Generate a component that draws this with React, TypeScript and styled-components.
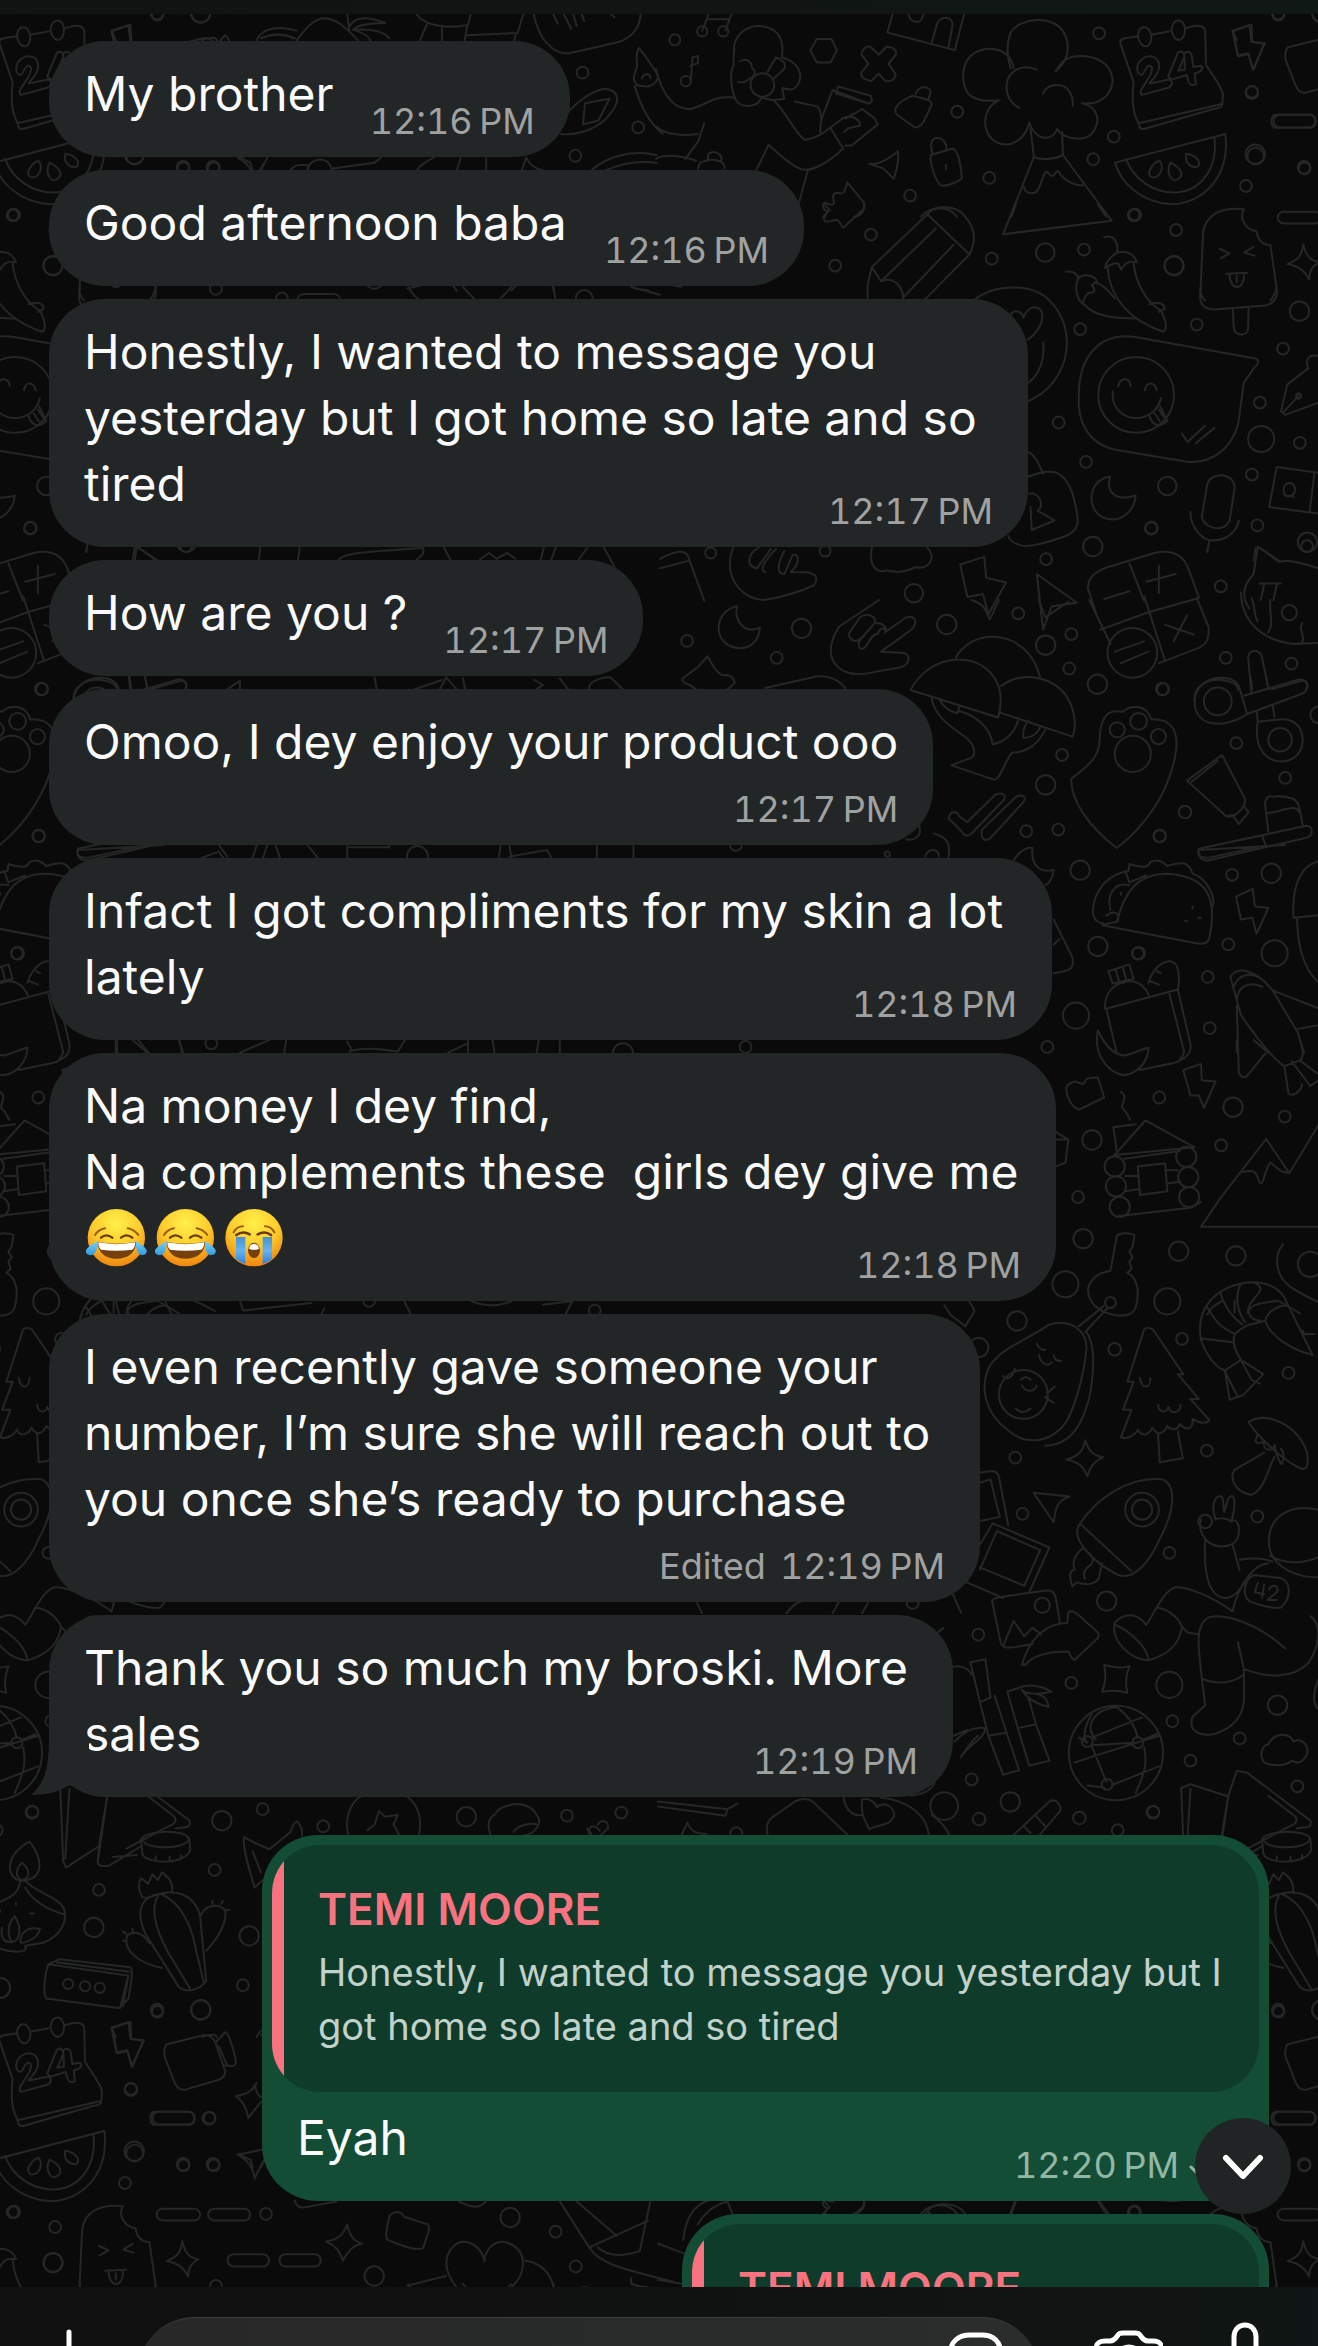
import React from "react";
import styled, { createGlobalStyle } from "styled-components";

const GlobalStyle = createGlobalStyle`
  *, *::before, *::after { box-sizing: border-box; }
  body { margin: 0; background: #0a0a0a; }
`;

/* ---------- layout ---------- */

const Screen = styled.div`
  position: relative;
  display: flex;
  flex-direction: column;
  height: 100vh;
  overflow: hidden;
  background: #0a0a0a;
  color: #fafafa;
  font-family: Inter, "Liberation Sans", sans-serif;
`;

const Wallpaper = styled.svg`
  position: absolute;
  inset: 0;
  width: 100%;
  height: 100%;
  fill: none;
  stroke: #252727;
  stroke-width: 2;
  stroke-linecap: round;
  stroke-linejoin: round;

  path,
  ellipse {
    vector-effect: non-scaling-stroke;
  }
`;

const TopBar = styled.header`
  position: relative;
  flex: none;
  height: 14px;
  background: linear-gradient(90deg, #111212, #101816);
`;

const Thread = styled.main`
  position: relative;
  flex: 1;
  min-height: 0;
  overflow: hidden;
  padding: 27px 49px 0;
`;

const MessageList = styled.ol`
  display: flex;
  flex-direction: column;
  gap: 13px;
  margin: 0;
  padding: 0;
  list-style: none;
`;

type Placement = "beside" | "overlap" | "below";

const Bubble = styled.li<{ $min?: number; $placement: Placement }>`
  position: relative;
  display: flex;
  flex-direction: ${(p) => (p.$placement === "beside" ? "row" : "column")};
  align-items: flex-end;
  justify-content: space-between;
  align-self: flex-start;
  min-width: ${(p) => p.$min ?? 0}px;
  max-width: 100%;
  padding: 20px 35px 16px;
  border-radius: 56px;
  background: #232626;
`;

const Body = styled.p`
  align-self: flex-start;
  margin: 0 0 14px;
  font-size: 48px;
  line-height: 66px;
  white-space: pre-wrap;
`;

const Line = styled.span`
  display: block;
  width: fit-content;
`;

const Meta = styled.div<{ $placement: Placement; $sent?: boolean }>`
  display: flex;
  flex: none;
  gap: 14px;
  margin-top: ${(p) => (p.$placement === "overlap" ? -40 : 0)}px;
  margin-left: ${(p) => (p.$placement === "beside" ? 36 : 0)}px;
  color: ${(p) => (p.$sent ? "#93b7a5" : "#a0a2a2")};
  font-size: 36px;
  font-variant-numeric: tabular-nums;
  line-height: 40px;
  white-space: nowrap;
`;

const Tail = styled.svg`
  position: absolute;
  left: -18px;
  bottom: 0;
  width: 60px;
  height: 60px;
  fill: #232626;
`;

const SentBubble = styled.li<{ $min: number; $first?: boolean }>`
  align-self: flex-end;
  min-width: ${(p) => p.$min}px;
  margin-top: ${(p) => (p.$first ? 25 : 0)}px;
  padding: 10px 10px 16px;
  border-radius: 56px;
  background: #144d35;
`;

const QuoteCard = styled.div`
  overflow: hidden;
  margin-bottom: 13px;
  border-radius: 48px;
`;

const Quote = styled.blockquote`
  margin: 0;
  padding: 32px 20px 39px 34px;
  border-left: 12px solid #f8737f;
  background: #0f3b2a;
`;

const QuoteName = styled.cite`
  display: block;
  margin-bottom: 4px;
  color: #f8737f;
  font-size: 44px;
  font-style: normal;
  font-weight: 600;
  line-height: 64px;
`;

const QuoteText = styled.p`
  margin: 0;
  color: #c1d2ca;
  font-size: 38px;
  line-height: 54px;
  white-space: pre-line;
`;

const SentRow = styled.div`
  display: flex;
  align-items: flex-end;
  justify-content: space-between;
  padding: 0 26px 0 25px;
`;

const Ticks = styled.svg`
  flex: none;
  align-self: center;
  width: 44px;
  height: 26px;
  margin-left: -4px;
  fill: none;
  stroke: #93b7a5;
  stroke-width: 3;
  stroke-linecap: round;
`;

const ScrollDown = styled.button`
  position: absolute;
  right: 27px;
  bottom: 73px;
  display: grid;
  place-items: center;
  width: 96px;
  height: 96px;
  padding: 0;
  border: 0;
  border-radius: 50%;
  background: #212424;

  svg {
    width: 44px;
    height: 44px;
    fill: none;
    stroke: #fff;
    stroke-width: 6;
    stroke-linecap: round;
    stroke-linejoin: round;
  }
`;

const Composer = styled.form`
  position: relative;
  display: flex;
  flex: none;
  align-items: flex-start;
  height: 59px;
  overflow: hidden;
  padding: 30px 38px 0 40px;
  background: linear-gradient(90deg, #101010 30%, #101615);
`;

const IconButton = styled.button`
  flex: none;
  width: 70px;
  height: 80px;
  padding: 0;
  border: 0;
  background: none;
  color: #fff;

  svg {
    display: block;
    width: 70px;
    height: 80px;
    fill: none;
    stroke: currentColor;
    stroke-width: 5;
    stroke-linecap: round;
    stroke-linejoin: round;
  }
`;

const Field = styled.label`
  display: flex;
  flex: 1;
  align-items: flex-start;
  min-width: 0;
  height: 114px;
  margin: 0 54px 0 28px;
  padding: 0 30px 0 40px;
  border-top: 1px solid #3a3c3c;
  border-radius: 57px;
  background: linear-gradient(90deg, #282828, #2a2d2c);
`;

const TextInput = styled.input`
  flex: 1;
  min-width: 0;
  height: 112px;
  padding: 0;
  border: 0;
  outline: 0;
  background: none;
  color: #fafafa;
  font: inherit;
  font-size: 48px;
`;

const Actions = styled.div`
  display: flex;
  gap: 47px;
`;

const Emoji = styled.svg`
  width: 65px;
  height: 61px;
  margin-right: 4px;
  vertical-align: -13px;
`;

/* ---------- wallpaper doodles ---------- */

type Dot = [number, number, number];
interface Sheet {
  x: number;
  y: number;
  sy: number;
  paths: string[];
  dots: Dot[];
}

const TILE_W = 1121;
const TILE_H = 1997;

const sheets: Sheet[] = [
  {
    x: 658,
    y: 0,
    sy: 0.3827,
    paths: [
      // notes
      "M105 80L122 32H176L160 80M118 50H168M78 212L82 150L95 146V165L76 172",
      // dancer with fan
      "M-5 180C10 250 40 290 80 284C120 272 130 250 178 255M180 130C180 95 210 60 255 70C290 80 300 110 294 150C330 160 345 190 335 215C325 240 310 235 295 230L300 258L272 262L245 255C240 280 200 285 185 262C175 240 168 190 180 170C178 155 180 140 182 128M195 160C210 150 222 160 224 178C235 185 230 200 218 205L205 215L190 215M260 188L280 150C300 160 305 165 300 180L275 205",
      "M275 262C310 300 325 350 350 366C380 360 395 345 410 333M325 265L378 278C390 290 385 300 388 312L385 345M388 312L415 235L500 270M428 226L505 250C512 262 505 272 498 270L422 244ZM410 333L440 308C460 300 480 310 480 328L452 335L442 345M410 335L440 388M485 285L515 310L522 325L460 380H445M485 285L445 310M440 388C400 430 360 450 340 442C310 430 285 400 263 378L232 448M356 445L335 530M-5 330C20 355 60 355 95 350M110 322L95 370L65 415M-5 415C20 400 70 410 90 420M95 440L100 425C130 410 160 420 158 440M118 415L120 402C135 390 155 405 150 420",
      // hexagon, cross
      "M377 102H412L425 132L410 163H377L362 132Z",
      "M505 122L524 143L543 122C560 122 568 132 565 142L548 167L565 195C562 210 550 214 540 212L524 192L507 212C492 210 480 200 483 190L500 167L483 142C485 128 495 120 505 122Z",
      // building
      "M558 35L545 85L705 131L727 38M650 115L662 65C668 40 700 40 700 65L690 125M595 35C595 62 630 65 630 38",
      // padlocks
      "M605 250C560 270 560 290 568 300L610 333C620 333 625 328 630 320L650 275C650 260 640 262 632 258ZM612 245C620 225 640 222 648 240L642 262",
      "M648 405L700 388C712 390 720 430 722 465C715 475 690 485 675 486C660 480 645 425 648 405ZM652 400C645 375 650 360 665 360C678 362 685 375 686 392",
      "M684 432V442",
      // arrow, puzzle piece
      "M502 428C520 430 535 425 570 395C572 410 570 440 560 467L535 440Z",
      "M450 477L490 530V545L440 595C432 590 435 578 425 574C415 575 405 582 396 578C390 570 402 560 402 552C390 548 390 535 396 530C408 532 412 540 418 532C420 520 410 515 420 505C432 500 432 512 442 502Z",
      // tree on a peak
      "M845 178C835 120 780 120 750 140C715 165 720 235 745 252C770 270 800 262 810 262C770 280 765 350 805 372C840 390 875 360 882 320C890 345 905 360 920 360C935 360 945 350 948 337C965 365 1010 370 1030 350C1055 315 1045 280 1008 270C1050 275 1075 250 1080 215C1080 160 1030 140 985 148C960 155 950 175 945 186C980 155 980 110 960 78C935 40 860 45 838 85C825 120 830 150 838 178",
      "M900 182C865 165 830 185 828 225C828 255 840 272 858 282M915 245C925 215 965 215 978 240C985 252 987 265 985 277M885 335L893 410C910 420 945 415 962 405L960 345M893 410L820 612L1078 577L962 405M870 488C868 505 895 512 903 495C912 480 912 460 922 448C930 450 930 462 938 460C945 458 942 445 952 448C960 470 990 485 1010 485",
      // calendar
      "M1098 112C1096 100 1110 100 1142 95M1175 90L1215 82M1252 75C1290 60 1298 70 1300 82L1302 165M1098 112L1130 215C1125 260 1130 300 1142 322L1340 272M1302 170C1320 200 1340 230 1342 245C1340 280 1345 280 1320 285L1155 337C1142 338 1142 325 1142 322",
      "M1140 95C1142 65 1165 62 1172 92C1175 125 1148 135 1140 95ZM1220 80C1222 48 1245 45 1252 72C1255 108 1228 118 1220 80Z",
      "M1140 190C1130 150 1180 130 1190 165C1195 190 1175 205 1168 218L1215 208C1225 212 1222 228 1210 230L1150 248C1140 240 1155 225 1165 205C1175 190 1178 170 1165 172C1155 178 1158 192 1148 196ZM1212 200L1235 138C1245 130 1252 140 1250 150L1236 185L1252 182L1250 140C1258 132 1266 135 1268 145L1272 175L1290 172C1298 178 1292 188 1275 192L1278 220C1270 225 1262 222 1260 212L1256 196L1220 208Z",
      // bolt
      "M1367 80L1410 65L1412 110L1442 113L1413 182L1403 142L1378 147Z",
      // watermelon
      "M1086 425L1348 350C1360 470 1290 530 1220 534C1150 530 1100 480 1086 425ZM1112 415C1130 470 1180 505 1230 503C1290 500 1330 440 1322 360",
      "M1192 420C1175 425 1158 455 1172 462C1190 470 1205 440 1192 420ZM1218 425C1205 450 1220 475 1232 470C1252 460 1245 440 1218 425ZM1255 402C1250 430 1270 440 1283 435C1292 420 1275 405 1255 402Z",
      // dashes
      "M1475 300H1550C1566 305 1566 328 1550 333H1475C1458 328 1458 305 1475 300ZM1485 553H1562C1580 558 1580 580 1562 584H1485C1468 578 1468 558 1485 553ZM1608 553H1682C1698 558 1698 580 1682 584H1608C1590 578 1590 558 1608 553ZM1653 672H1727C1743 677 1743 700 1727 704H1653C1637 698 1637 677 1653 672ZM1776 672H1850C1866 677 1866 700 1850 704H1776C1760 698 1760 677 1776 672Z",
      // ice lolly
      "M1392 547C1340 540 1300 560 1295 610L1288 780C1290 805 1310 810 1330 808L1445 798C1470 790 1472 770 1470 755L1455 640C1440 642 1425 630 1422 604C1395 600 1380 570 1392 547ZM1366 808L1368 860C1375 880 1398 878 1402 860L1403 804M1335 650L1358 662L1337 675M1415 645L1393 660L1417 668M1350 715L1400 713M1358 716C1358 762 1395 762 1392 714M1375 722V738",
      // chillies
      "M1060 620C1085 610 1095 640 1090 660C1065 680 1065 690 1062 700C1080 690 1085 685 1095 690L1100 705C1108 690 1115 680 1138 685C1130 660 1110 655 1092 660M1068 700C1075 790 1130 840 1200 867C1210 860 1208 840 1195 812C1160 790 1135 740 1130 688M1168 795C1190 785 1205 795 1203 808L1190 815",
      "M970 710C985 708 998 715 998 728M1000 725C1020 712 1040 725 1043 735L1030 745C1040 755 1038 765 1028 765C1018 762 1010 785 1010 795C990 775 990 745 1000 725ZM1012 795C1040 830 1090 832 1135 832M1043 740C1060 745 1075 765 1085 780",
      // sparkle
      "M1533 638C1540 670 1550 682 1572 685C1555 695 1548 705 1547 730C1535 705 1520 695 1496 690C1520 680 1530 668 1533 638Z",
      // pencil
      "M498 785V745L508 698L640 560C660 530 710 540 725 560C750 590 760 620 740 665L632 785M640 560L740 665M660 597L530 735M702 640L582 778M508 698L530 735C560 720 585 750 582 785",
      // heart balloon and padlock
      "M750 785C800 740 890 740 930 785C1000 860 980 1000 880 1048M838 822C845 808 865 812 868 830C880 795 910 795 913 822C915 850 895 875 878 888M915 895C920 940 905 980 880 1000M882 1182C900 1195 905 1215 915 1238M880 1245C940 1220 965 1230 985 1290C1005 1370 1000 1385 970 1400C920 1420 880 1430 862 1425C845 1420 835 1410 832 1400M882 1290C905 1285 920 1320 902 1335L942 1360L888 1385L885 1325",
      // speech bubble
      "M1130 880L1420 937C1430 940 1425 955 1418 958L1392 1000L1378 1110C1360 1180 1310 1210 1260 1207L1090 1176C1020 1160 995 1100 1000 1030C1000 930 1050 870 1130 880ZM1093 1010C1098 985 1120 985 1123 1008M1157 1020C1160 995 1180 998 1185 1020M1080 1022C1075 1110 1180 1115 1195 1040M1168 1088C1175 1110 1190 1120 1210 1100L1193 1062M1180 1080L1192 1100M1190 1070L1202 1090M1245 1133L1258 1155L1300 1112M1278 1158L1322 1118",
      // moon, microphone
      "M1074 1245C1065 1280 1080 1312 1135 1295C1130 1345 1095 1360 1075 1357C1015 1350 1015 1255 1074 1245Z",
      "M1305 1265C1315 1230 1370 1235 1370 1275L1358 1360C1345 1395 1295 1380 1292 1350ZM1265 1338C1265 1380 1295 1415 1320 1412C1350 1412 1375 1390 1380 1360M1310 1412L1305 1442",
      // pen nib
      "M1480 1075L1495 1005L1545 962C1535 935 1550 925 1570 930L1610 980L1575 1050L1490 1084ZM1485 1078L1522 1035",
      // playing card
      "M1470 1220L1600 1240L1590 1345L1452 1325ZM1560 1232L1548 1340M1490 1295C1478 1270 1500 1250 1512 1270C1518 1290 1505 1300 1490 1295L1510 1298",
      // bolt and arrow, hand, cat
      "M718 1475L775 1455L780 1510L827 1522L785 1605L772 1552L735 1560ZM900 1500L995 1575L935 1585L915 1645ZM5 1460C40 1440 70 1430 75 1465L5 1485M75 1465L110 1570",
      "M178 1432C155 1500 190 1560 250 1568C300 1560 340 1545 370 1530C385 1505 370 1500 355 1495H315C340 1470 335 1445 320 1450L300 1500C280 1500 285 1470 300 1440M240 1430C210 1450 210 1480 235 1485L268 1435M255 1495C235 1490 265 1450 280 1435M508 1432C500 1480 520 1500 545 1490C570 1500 600 1490 610 1482C650 1490 660 1450 640 1432",
      "M1425 1428L1475 1468C1510 1460 1550 1480 1600 1495M1425 1428L1415 1500C1390 1530 1385 1560 1405 1590M1430 1525H1480M1440 1528L1432 1568M1470 1528L1462 1568",
      // tablet top
      "M1040 1600L1022 1540C1020 1515 1030 1500 1060 1485L1180 1445C1220 1435 1245 1450 1258 1480L1285 1560M1120 1472L1155 1570M1190 1478V1550M1160 1520L1230 1500M1060 1565L1120 1545",
    ],
    dots: [
      [105, 82, 12], [155, 82, 12], [66, 212, 12], [248, 222, 28], [40, 104, 13], [711, 292, 14], [599, 511, 14], [506, 613, 14], [421, 694, 14], [787, 465, 14],
      [793, 676, 14], [1048, 87, 14], [1083, 357, 14], [1034, 416, 14], [1133, 562, 14], [1012, 652, 14], [920, 660, 22], [1231, 601, 14],
      [1226, 694, 23], [1003, 860, 14], [1280, 848, 14], [1411, 240, 14], [1419, 403, 23], [1397, 486, 14], [1536, 440, 14], [1608, 440, 14],
      [1524, 813, 23], [1485, 911, 14], [1430, 1052, 14], [1433, 1147, 31], [1525, 1157, 14], [952, 1104, 14], [1017, 1207, 14],
      [1210, 1270, 22], [1411, 1240, 14], [1172, 1380, 14], [1424, 1373, 14], [1033, 1428, 23], [1543, 1417, 23], [922, 1461, 14],
      [1337, 1532, 14], [608, 1550, 22], [397, 1440, 13], [125, 1445, 13], [1474, 38, 13], [1136, 1032, 90], [1522, 1035, 6],
      [1732, 567, 14], [1598, 316, 14],
    ],
  },
  {
    x: 658,
    y: 600,
    sy: 0.3827,
    paths: [
      "M188 16C180 55 205 90 242 72C240 115 210 130 185 125C130 115 130 30 188 16Z",
      // rock hand
      "M525 0L430 70C385 150 425 200 490 193L580 175C600 165 600 140 580 138L530 135M530 135L605 75C620 50 605 40 590 45L545 80C535 70 525 75 522 88C505 90 505 110 490 125C478 135 470 115 485 98M485 98C465 120 445 95 458 80L480 45C500 30 520 45 515 60L485 98M515 60C540 60 545 75 540 85",
      // tablet with buttons
      "M1025 0L1075 115M1050 78L1165 32L1285 -5M1155 -10L1205 160M1280 -5L1308 70C1310 100 1305 115 1285 125L1190 165M1205 65L1272 90M1257 40L1225 108M1085 135L1155 108M1100 165L1165 135",
      "M1385 -20C1385 50 1430 105 1510 115L1580 112M1410 -5C1420 20 1415 40 1425 55M1455 0C1450 30 1465 60 1450 85M1530 60C1520 80 1540 95 1530 112",
      "M745 0C770 10 775 15 788 50C795 40 800 20 810 0M905 0L920 45L975 5",
      "M58 205L95 175L118 147C125 160 130 180 150 195C170 195 180 200 182 218L165 233M58 205C55 222 75 215 90 233",
      "M255 230L375 200C405 195 430 210 445 230",
      // mushrooms
      "M600 235C640 150 740 130 790 190C815 220 820 260 808 307ZM708 150C740 85 830 75 880 140C900 165 905 190 908 203M815 225C870 180 950 205 975 260C995 300 992 340 985 357L815 295M650 255C655 295 680 320 730 358C755 380 755 405 745 412L697 432L800 470C815 465 820 430 840 400C880 395 900 380 920 340M668 258C680 285 700 295 712 295L716 277M716 290C750 300 790 330 795 377C830 370 850 340 855 315M868 360C865 340 875 320 880 315M868 360C890 360 905 345 908 330",
      // paw on a pin
      "M982 467C1040 420 1050 400 1050 350C1055 300 1070 285 1105 292C1120 275 1160 270 1172 312C1210 310 1240 330 1230 400C1215 500 1160 590 1090 648C1020 590 980 520 982 467Z",
      // scissors
      "M1392 250L1525 207C1545 210 1550 235 1530 245L1400 298L1380 225M1410 245L1402 150C1405 128 1430 128 1435 150L1450 230M1422 290L1425 318L1475 312M1460 275L1465 305M1275 265C1275 200 1360 185 1380 225M1275 265C1275 330 1340 340 1400 298M1425 318C1415 380 1440 420 1480 422C1530 420 1540 370 1525 335C1510 310 1490 310 1475 312",
      "M1340 405L1257 472L1350 565C1370 570 1395 545 1395 520ZM1330 420L1268 475M1350 565L1365 562L1380 585L1403 555L1395 542",
      // toothbrush
      "M1285 650L1540 590C1555 590 1558 610 1545 620L1310 680C1290 685 1280 665 1285 650ZM1435 615L1445 645M1450 605L1442 530C1450 500 1460 520 1475 512C1500 515 1520 515 1525 550L1532 590M1445 555C1470 560 1480 545 1500 545C1515 540 1520 548 1525 555",
      // ticks
      "M690 570C695 550 710 550 715 565L735 580L800 510C815 500 830 508 822 522L745 610C735 620 725 615 722 605ZM770 600L850 515C865 505 878 515 868 528L790 622C775 635 765 620 770 600Z",
      "M845 680C860 655 875 645 890 648C885 690 905 715 940 705C938 725 930 740 920 745M620 590C630 620 605 630 590 625M655 610C690 620 695 640 690 672M635 670C640 650 665 645 668 670",
      // taco
      "M1055 850L1285 898C1305 900 1310 890 1312 870C1330 760 1290 720 1210 715C1140 715 1110 760 1090 840ZM1058 845C1020 840 1030 780 1060 740C1080 720 1100 710 1118 708L1120 690C1150 700 1165 700 1170 685C1190 675 1200 685 1210 695C1240 685 1260 680 1270 715C1300 725 1325 770 1318 800M1110 708L1120 738L1160 720M1075 810C1065 770 1085 735 1120 745M1065 825C1080 810 1100 815 1092 840M1252 838H1258M1284 830H1290M1270 800V806M1100 765V770M1105 790V794",
      "M1373 775L1413 755L1418 800L1450 805L1422 872L1412 830L1385 835Z",
      "M1590 680C1530 680 1505 740 1510 830L1600 820M1518 830C1520 900 1530 960 1570 1000",
      "M940 835L985 935C988 960 985 970 940 975M940 900L955 885",
      // lunch bag and banana
      "M1065 1068L1235 1018L1265 1160C1268 1190 1250 1200 1225 1210L1145 1228M1065 1068L1090 1185M1062 1068C1060 1030 1080 1005 1105 1000C1130 990 1155 1000 1168 1038M1070 970L1120 952L1130 990L1080 1002ZM1088 968L1095 995M1105 962L1112 990M1165 1000C1180 950 1215 930 1232 955C1240 975 1238 1000 1235 1018M1185 970L1195 975M1168 995L1190 1005M1215 1030L1250 1180C1248 1195 1240 1200 1235 1208M1045 1125C1060 1160 1080 1190 1110 1190C1130 1185 1145 1175 1165 1170C1165 1210 1135 1240 1105 1242C1060 1230 1035 1180 1045 1125Z",
      // plane
      "M1360 985C1375 955 1420 965 1460 1020L1520 1130C1535 1180 1535 1195 1525 1203L1488 1218C1460 1200 1420 1140 1385 1085ZM1375 1045C1378 1010 1400 995 1435 1010M1368 1010C1380 975 1410 975 1425 985M1375 1060L1380 1235C1385 1250 1395 1250 1402 1240L1443 1185M1460 1020L1600 1080M1515 1122L1600 1105M1488 1218L1498 1290C1510 1300 1530 1280 1530 1265M1505 1205L1550 1270L1600 1230M1525 1203L1570 1240",
      "M1248 1228L1290 1212L1292 1255L1325 1258L1297 1327L1285 1295H1265Z",
      "M970 1275C972 1262 985 1262 990 1258L1010 1265L1020 1250L1045 1247L1060 1300L1000 1332C985 1328 970 1300 970 1275ZM1100 1285C1120 1300 1095 1320 1105 1330C1118 1340 1115 1350 1122 1358",
      // log cabin
      "M1085 1450L1158 1360L1275 1430ZM1090 1440L1082 1378L1135 1370M1110 1505H1140M1108 1460L1240 1440M1140 1480L1205 1472L1210 1545L1145 1555ZM1205 1490H1235M1210 1525L1240 1520M1110 1545L1140 1540M945 1390L975 1410L968 1470L945 1480M945 1410H970",
      "M1600 1638H1290L1335 1565L1445 1408L1500 1498L1570 1370M1390 1495C1410 1490 1420 1485 1428 1520C1440 1540 1438 1490 1455 1470L1480 1492L1500 1498",
    ],
    dots: [
      [341, 74, 23], [69, 107, 14], [282, 151, 14], [686, 64, 23], [856, 35, 14], [982, 89, 14], [921, 118, 23], [977, 179, 14], [1044, 220, 23],
      [1200, 233, 14], [1349, 151, 14], [1505, 166, 14], [1127, 138, 59], [1500, 33, 18], [1091, 339, 18], [1142, 317, 20], [1189, 357, 18], [1128, 402, 43],
      [1330, 265, 33], [1478, 365, 28], [960, 405, 14], [1374, 374, 14], [1490, 465, 14], [921, 483, 23], [875, 604, 14], [951, 600, 14],
      [1252, 554, 15], [1192, 617, 14], [1003, 706, 23], [1364, 718, 14], [1457, 714, 23], [1045, 905, 23], [1142, 923, 15], [1355, 900, 14],
      [1465, 923, 31], [1306, 985, 14], [993, 1086, 31], [1311, 1119, 14], [925, 1168, 14], [1191, 1300, 14], [1366, 1325, 23], [1489, 1350, 14],
      [1031, 1411, 23], [1338, 1425, 14], [998, 1560, 14], [1085, 1480, 24], [1088, 1532, 24], [1255, 1455, 24], [1260, 1508, 24], [1262, 1560, 24],
      [1570, 300, 20], [208, 1168, 14], [545, 664, 6], [185, 640, 14],
    ],
  },
  {
    x: 658,
    y: 1200,
    sy: 0.3827,
    paths: [
      "M1095 42L1265 20M1270 18L1290 5",
      // key and avocado
      "M1090 95C1095 85 1120 85 1132 92L1128 120L1120 135L1128 150L1120 160L1125 180L1115 190C1140 205 1145 240 1135 280C1130 305 1095 305 1075 298C1040 290 1020 260 1022 230C1030 200 1050 190 1075 185ZM1068 282L1015 345M1058 278L1000 330",
      "M930 325C980 310 1020 340 1018 390C1010 470 990 540 970 580C930 640 870 640 830 600C780 560 760 490 790 430C820 385 870 370 930 325ZM1018 345C1040 380 1035 440 1028 500C1010 590 980 640 920 642M820 460C828 475 845 460 848 440M862 470C870 460 880 462 885 470M865 485C875 505 895 500 900 485M925 505L942 488M920 515L940 530M850 545C862 558 875 556 885 545M900 375C905 390 915 392 920 392M905 405C910 430 925 435 935 425M940 405C940 415 948 422 958 420",
      // fir
      "M1155 338C1165 330 1175 335 1180 345L1248 455H1235L1285 520H1265L1310 575C1305 585 1290 585 1270 572C1272 600 1255 605 1240 585C1235 605 1215 600 1210 590C1200 615 1185 615 1175 595C1165 620 1145 615 1140 600C1130 620 1110 625 1100 620L1125 548H1105L1130 475H1115ZM1145 465C1148 495 1170 495 1170 465M1188 535C1190 560 1212 555 1212 540C1218 560 1240 560 1242 535M1188 608L1192 685L1247 675L1235 605",
      // prawn
      "M1290 365C1275 270 1340 220 1410 215C1460 215 1485 240 1495 270L1555 405C1500 390 1450 350 1443 315C1450 285 1480 275 1495 275M1443 315C1420 325 1395 320 1370 352C1362 375 1375 400 1385 418L1438 455L1390 510L1358 522L1347 445M1290 365C1300 400 1325 440 1347 445L1385 418M1385 418L1410 470L1430 480M1345 445L1378 515M1292 362L1365 372M1305 280C1330 330 1350 340 1372 350M1335 240C1350 290 1370 310 1388 325M1385 218C1370 250 1375 290 1395 320M1415 215C1455 235 1410 250 1402 285C1405 310 1420 315 1430 315M1485 115C1460 150 1470 200 1500 225C1530 250 1580 270 1610 290M1530 340L1538 352M1535 350H1560",
      // sparkle, mushroom
      "M1015 628C1025 660 1035 668 1058 672C1035 685 1028 695 1020 722C1010 695 1000 685 970 678C1000 670 1010 655 1015 628Z",
      "M1403 580C1450 550 1520 590 1542 660C1545 680 1545 705 1530 703C1480 680 1420 610 1403 580ZM1425 615C1412 635 1425 640 1440 630C1435 655 1460 660 1465 640C1470 675 1480 690 1482 690C1490 670 1485 655 1480 650M1440 660L1370 705C1355 730 1375 765 1410 770C1440 760 1450 700 1465 670",
      // cursor and rocket
      "M892 765L978 775C950 785 945 800 940 842Z",
      "M1000 850C1040 780 1120 720 1200 730C1235 750 1225 820 1190 890C1170 940 1130 1000 1090 978C1040 950 980 890 1000 850ZM1005 848L1125 970M1010 910C985 930 985 955 990 965C975 970 978 990 985 1010C990 1005 992 998 1000 1000C1020 1010 1045 1000 1048 985L1055 950M1020 920C1040 935 1035 950 1020 960C1010 970 1010 985 1015 990",
      // photos
      "M765 712L795 708C808 710 810 720 812 735L832 850M767 738L790 730L812 828L768 838M765 900L795 845L930 908L882 1025M765 965L805 865L908 915L870 1008L765 960M735 1000L820 1040",
      "M795 1055C790 1045 800 1040 810 1038L925 1020C940 1020 942 1030 945 1040L955 1105M795 1055L815 1160C820 1172 835 1170 850 1168L890 1160M820 1165L845 1100L870 1140L890 1118L910 1135",
      "M865 1215C880 1150 920 1105 972 1105L975 1078C980 1072 990 1075 1000 1085L1045 1130C1050 1138 1045 1145 1040 1150L990 1202C980 1200 978 1180 975 1180C940 1180 895 1185 872 1215Z",
      // astronaut
      "M1325 835C1310 790 1330 760 1342 780L1345 815L1355 780C1370 760 1375 790 1362 840M1290 835C1285 860 1290 870 1300 885C1320 915 1370 910 1378 880C1385 850 1375 830 1362 840C1350 830 1330 830 1325 835M1300 885C1295 980 1310 1040 1350 1040C1380 1035 1390 1000 1410 975M1365 900L1382 968M1382 940C1410 935 1440 935 1460 945M1365 1075C1380 1000 1420 950 1450 950M1365 1075C1310 1030 1250 1010 1230 1012C1200 1020 1180 1080 1160 1110C1140 1080 1110 1075 1085 1105C1075 1150 1120 1200 1165 1203C1210 1190 1240 1160 1245 1115L1258 1130L1285 1135M1085 1110C1110 1120 1160 1160 1165 1200M1185 1065C1220 1070 1240 1100 1245 1115M1490 1172C1430 1110 1350 1080 1310 1090C1270 1110 1285 1180 1300 1320L1270 1350C1255 1400 1310 1405 1335 1390C1380 1370 1395 1330 1392 1290V1225C1385 1190 1380 1170 1378 1155M1292 1250C1330 1270 1370 1260 1392 1240M1392 1225C1450 1250 1510 1250 1545 1210C1570 1170 1580 1110 1550 1088M1570 810C1500 790 1445 830 1452 905C1460 960 1520 990 1580 985M1455 930C1490 955 1550 950 1580 925",
      "M1415 980L1480 988C1505 1000 1505 1040 1480 1065C1460 1070 1420 1055 1405 1048C1385 1030 1395 990 1415 980ZM1425 1000L1418 1025L1440 1030M1440 1005L1435 1040M1452 1018C1460 1000 1478 1010 1470 1025L1448 1045H1470",
      "M1060 1215C1080 1220 1100 1225 1120 1218C1112 1240 1110 1265 1115 1288C1095 1280 1070 1282 1055 1285C1065 1260 1065 1240 1060 1215Z",
      // bamboo
      "M742 1208L778 1200L790 1300L765 1312ZM765 1312L785 1400L828 1392L800 1295M785 1400L820 1502L858 1490L828 1392M702 1220C720 1215 740 1225 745 1240M830 1285L870 1270C900 1265 920 1275 935 1285C900 1295 870 1290 865 1280C880 1310 910 1320 928 1325C925 1300 910 1290 895 1290M830 1285L855 1380L898 1370L880 1300M855 1380L882 1478L930 1465L898 1370M705 1415C730 1385 755 1375 778 1380C775 1410 740 1420 720 1455C735 1430 745 1415 760 1400M702 1400L735 1385",
      // globe
      "M1030 1345C1010 1380 1010 1410 1020 1418L1000 1405M1030 1405L1150 1352M1030 1425L1065 1520M1030 1425L1130 1418M1040 1410C1010 1370 1040 1330 1090 1325C1120 1350 1135 1380 1140 1405M1150 1412L1185 1395M1155 1430C1165 1480 1150 1510 1135 1550M990 1470L1045 1450L1190 1400M1080 1528L1190 1480M1060 1535L1020 1530",
      "M1455 1475C1420 1470 1435 1420 1450 1422C1465 1390 1500 1390 1510 1415C1535 1400 1555 1440 1535 1460C1525 1475 1515 1470 1505 1465C1490 1480 1470 1478 1455 1475Z",
      "M1570 1250C1555 1290 1555 1320 1570 1330M680 275L695 300L730 330L752 290L740 265M678 1118L660 1135M700 1030L720 1078M90 1048L105 1080M305 1080C320 1060 330 1050 345 1048M430 1050L415 1080M500 1050L485 1080",
    ],
    dots: [
      [1097, 18, 24], [1010, 101, 23], [1237, 134, 23], [1373, 146, 23], [968, 220, 31], [1210, 265, 31], [853, 316, 23], [762, 385, 23], [1085, 390, 15],
      [1245, 363, 14], [1498, 452, 14], [1075, 268, 13], [868, 508, 58], [849, 673, 14], [1304, 655, 14], [866, 820, 14], [1424, 827, 14],
      [1150, 809, 40], [1150, 809, 24], [1215, 922, 14], [913, 1059, 18], [1066, 1048, 23], [1300, 840, 16], [761, 1136, 14], [982, 1262, 14],
      [1215, 1267, 31], [1222, 1362, 14], [1472, 1320, 23], [1382, 1407, 14], [1265, 1465, 14], [745, 1514, 14], [1088, 1445, 112], [1020, 1415, 13],
      [1140, 1418, 13], [1067, 1527, 13], [1519, 1532, 14], [1550, 168, 30], [605, 1053, 14],
    ],
  },
  {
    x: 0,
    y: 1746,
    sy: 0.3827,
    paths: [
      // folded map
      "M143 110L150 300L157 318L235 262L255 130M165 112L155 295M143 110L165 100L255 132M235 262L232 305C235 315 245 315 260 312L335 262M232 305L255 130L275 65L300 70L450 195C455 215 440 212 418 215M350 130L415 185C420 195 415 205 400 210L300 268M268 290L325 285",
      "M335 245C340 220 445 215 450 245L452 270C445 310 345 312 338 280ZM342 250C350 270 440 270 448 245M370 288V300M403 290V302M430 285V295",
      // oil lamp
      "M70 250C100 290 110 350 50 352C10 345 15 280 70 250ZM52 305C75 325 70 350 50 350C35 340 38 320 52 305ZM48 352C46 380 35 395 -30 420M60 352C80 380 130 390 150 420C165 460 140 500 100 515L60 522M60 370C80 410 120 430 152 440M60 522C70 545 20 540 -10 525M35 445C20 460 15 490 28 512C45 510 55 480 35 445ZM5 475C0 500 10 515 28 512M95 478C60 470 45 495 50 515C70 512 90 500 95 478ZM38 410V416M72 438H80M0 430V434",
      // cactus
      "M338 395C325 370 330 355 335 345L352 360L362 335L375 350L385 330L400 345C412 360 408 375 410 385M338 395C350 400 360 395 368 388M368 390C330 400 325 440 345 490L425 630C440 645 460 638 475 630L490 615L475 440C460 390 420 370 368 390ZM375 392C355 430 375 490 400 540L452 635M385 388C430 410 455 470 465 530L485 622M478 440C490 415 520 410 535 430C540 460 520 500 490 535M385 580C340 570 290 540 302 495C320 480 340 490 355 515M505 415V405M525 412L530 405M535 430L545 428M300 490L292 485M315 485V477M292 508L300 512",
      // brick with dots
      "M115 570L305 600L285 685L110 660C100 640 108 590 115 570ZM115 570L142 557L310 578C315 582 315 600 305 660L285 685M135 565L308 590M305 600L292 680",
      // video camera
      "M395 780L485 755C500 755 508 765 512 775L535 850C535 860 530 868 520 872L440 898C425 900 420 890 415 880L392 815C388 800 390 790 395 780ZM512 775L535 748C545 750 562 820 560 830C555 840 550 835 530 835M520 785L540 835",
      "M265 738L305 722L310 765L340 770L315 838L302 795L277 800Z",
      "M365 956H452C466 962 466 984 452 990H365C355 984 355 962 365 956Z",
      "M605 885C610 910 615 915 622 918M590 972C585 940 575 925 560 915C590 910 600 900 610 880M590 972L620 930M565 1068L622 1055M565 1068C585 1080 600 1095 605 1130L625 1085",
      // fox
      "M605 370C595 330 575 270 580 238C605 255 625 262 640 270L690 225C695 205 700 200 705 197C715 205 718 220 718 235M605 370L625 350M600 275L620 330",
      "M873 220L890 205L900 170L915 185L945 180L935 205L948 232M828 235C815 180 840 140 860 130M965 130C990 150 1005 180 995 235",
      "M1165 230C1155 200 1165 185 1175 180C1185 160 1200 158 1210 155C1240 145 1265 160 1275 180C1290 200 1275 230 1240 235M1220 225C1230 205 1265 200 1275 205M1395 215L1400 230M1420 205C1430 190 1445 195 1445 215L1425 235M1405 230C1390 210 1415 200 1425 222",
      "M700 1188C705 1205 715 1208 725 1205L800 1190M1090 1190C1110 1200 1135 1215 1155 1190M925 1228C935 1215 955 1215 960 1230L1010 1248C1022 1250 1020 1260 1018 1270L1005 1312C990 1320 950 1305 920 1290C912 1275 925 1240 925 1228ZM825 1250C830 1280 840 1295 860 1300C840 1305 825 1320 815 1345C805 1315 795 1305 775 1295C800 1290 815 1280 825 1250Z",
      "M1150 1345C1155 1310 1180 1285 1210 1300C1255 1320 1250 1380 1215 1415M1152 1345C1140 1300 1100 1280 1075 1310C1050 1340 1060 1380 1085 1415M968 1410L1060 1385M1248 1345C1285 1350 1310 1380 1315 1415",
      "M1330 1190L1400 1310L1540 1240M1370 1190L1465 1280M1400 1310C1420 1350 1470 1365 1600 1400M1420 1310C1450 1340 1490 1330 1520 1320L1545 1190M1500 1390C1495 1410 1510 1412 1540 1414",
    ],
    dots: [
      [76, 173, 15], [527, 195, 23], [624, 165, 14], [768, 210, 14], [1108, 185, 23], [1347, 182, 14], [1476, 174, 14], [510, 324, 14], [235, 376, 14], [223, 474, 23],
      [592, 496, 23], [162, 622, 12], [202, 628, 12], [237, 632, 12], [0, 632, 24], [577, 625, 14], [373, 690, 15], [477, 689, 23], [311, 898, 15],
      [496, 973, 15], [1212, 1232, 23], [1320, 1269, 14], [889, 1385, 23], [1368, 1360, 14],
    ],
  },
  {
    x: 658,
    y: 1746,
    sy: 0.3827,
    paths: [
      "M0 145L165 165L190 150M0 158L160 182L165 165M55 235L70 200C78 225 90 228 115 230M260 230C255 200 265 190 280 180L325 145C345 135 360 138 370 148L450 232M440 130C445 170 465 185 485 180M485 140C500 135 515 145 520 160C540 140 565 165 560 185C550 210 520 205 502 218C495 200 480 180 485 140ZM530 135C590 140 640 180 643 232M600 130C640 125 655 110 658 90M650 180C670 195 685 215 692 232",
      "M845 232L930 145C945 135 960 155 955 170L905 235M895 180L922 212M870 210L885 228",
      "M60 1290C65 1240 80 1200 125 1185M95 1250C110 1220 130 1200 165 1190L178 1225M0 1300L60 1325M0 1395L55 1405M395 1190L408 1205L392 1222M490 1190C490 1210 480 1220 465 1222M625 1222C645 1195 690 1190 710 1222M850 1190L840 1222M1045 1190L1065 1222",
    ],
    dots: [[680, 157, 33], [763, 191, 15], [837, 146, 23], [1001, 188, 15], [1177, 172, 14], [1092, 220, 14], [186, 228, 14], [1133, 1217, 14]],
  },
  {
    x: 0,
    y: 0,
    sy: 0.3827,
    paths: [
      // island
      "M610 105C620 75 660 65 705 80M620 100C650 85 680 90 700 100M705 105C730 70 745 50 770 48C800 50 820 70 850 105M825 38L830 80M830 70C840 45 870 40 915 60C880 60 850 65 838 78C880 75 910 80 925 100M845 80C860 85 875 95 880 105M265 80L305 66L312 105M265 80L275 105M480 105C500 95 515 98 515 105",
      // robot
      "M990 38C1010 70 1070 75 1112 65L1118 38M1015 62L998 105M1050 70V105M1110 68L1104 105M1110 92L1230 86L1243 38M1225 90L1222 105",
      // lips
      "M1268 38C1280 100 1310 140 1350 140L1470 110C1510 95 1520 65 1522 38M1315 38L1325 62M1340 38L1357 75M1362 38L1370 68M1382 38L1388 55M1452 38L1460 45",
      "M565 410L595 425L600 445M635 412L620 445M690 445C700 430 710 430 730 432M730 445C735 410 785 405 788 445M790 440L890 425L905 412M990 445C1000 430 1015 420 1030 412M1095 412L1085 445M1155 412V445M1250 412L1240 445M1250 412C1260 435 1275 442 1290 445",
      "M1332 350C1370 355 1410 340 1440 310C1475 270 1475 240 1440 232C1410 235 1370 265 1345 300M1390 270L1448 258L1422 315L1385 325ZM1405 445C1440 410 1500 390 1560 405M1440 445C1480 425 1520 420 1560 425",
      "M1518 125C1505 150 1520 165 1510 185C1500 210 1510 225 1525 225C1550 230 1570 210 1560 190C1550 175 1540 155 1518 125ZM1508 225C1520 270 1540 320 1575 350M1525 205C1530 190 1545 190 1545 205",
      "M190 750C185 770 195 780 200 785M370 750C365 770 360 780 355 785M705 785C710 770 715 768 725 768H795C805 770 808 780 808 785M970 750C980 770 990 780 1000 785M1130 785L1100 750M1215 750L1185 785M1315 750L1320 785M1500 750L1568 770",
      "M205 1435V1442M320 1432L315 1465M330 1432L375 1465M618 1432L615 1462M712 1432L708 1462M805 1462C820 1445 850 1445 960 1435L1005 1432C1010 1445 1000 1455 990 1462M1055 1432L1070 1462M1140 1462L1162 1445L1180 1460L1205 1445L1225 1460M1285 1462L1292 1432M1310 1462L1320 1432M1375 1462L1395 1432M1435 1432L1460 1480",
    ],
    dots: [[374, 38, 14], [477, 34, 23], [1384, 190, 14], [1516, 333, 14], [1367, 407, 14], [30, 562, 14], [126, 694, 22], [320, 408, 20], [435, 437, 15], [506, 437, 15], [670, 780, 14], [1388, 780, 20], [513, 755, 14], [72, 1380, 15], [442, 1427, 14]],
  },
  {
    x: 0,
    y: 560,
    sy: 0.3333,
    paths: [
      "M308 352L312 388M345 352L350 388M358 388L430 362C445 362 445 375 440 388M540 388L570 362V388M890 352L895 388M985 388L1050 360M1100 355L1105 388M1060 352L1045 388M1060 352L1085 388M1270 360L1290 375L1275 388M1330 355L1350 388M175 425C170 380 205 355 240 360C270 365 280 380 278 390M1400 388C1395 360 1440 350 1450 352L1480 388",
      "M185 870L390 855M185 870C180 890 195 895 210 893L330 860M480 893L520 875L530 893M520 855L540 890M600 893L610 855M625 893L635 855M655 855L665 893M730 855L755 893M825 855V893M830 862H925V855M1190 855L1185 893M1210 890L1300 870L1310 893M1210 855L1215 893M1418 855V893M1505 855V893",
      "M275 1440V1478M315 1440L350 1478M425 1440L435 1478M570 1478L640 1440M680 1440L675 1478M825 1445C830 1465 840 1460 830 1475C860 1460 900 1465 945 1475L962 1440M1065 1478L1110 1450M1112 1440V1478M1170 1440L1175 1478M1280 1440L1275 1478M1330 1440V1478",
    ],
    dots: [[98, 387, 15], [92, 828, 15], [40, 1180, 14], [992, 890, 25], [502, 1450, 14], [1480, 1480, 24]],
  },
  {
    x: 0,
    y: 1301,
    sy: 0.3827,
    paths: [
      "M240 0C215 15 210 25 205 35M270 0V30M300 30C310 5 340 5 370 0M375 0L425 32M570 0L578 25L740 5M770 20L765 32M960 0L975 32M1120 0C1150 15 1190 15 1215 0M1290 10L1360 0L1345 32",
    ],
    dots: [[877, 0, 14], [1413, 25, 14]],
  },
];

const offsets = [
  [0, 0], [-TILE_W, 0], [TILE_W, 0],
  [0, TILE_H], [-TILE_W, TILE_H], [TILE_W, TILE_H],
  [0, -TILE_H], [-TILE_W, -TILE_H], [TILE_W, -TILE_H],
];

function DoodleWallpaper() {
  return (
    <Wallpaper aria-hidden="true">
      <defs>
        <g id="doodles">
          {sheets.map((s, i) => (
            <g key={i} transform={`translate(${s.x} ${s.y}) scale(0.4209 ${s.sy})`}>
              {s.paths.map((d) => (
                <path key={d} d={d} />
              ))}
              {s.dots.map(([cx, cy, r], n) => (
                <ellipse key={n} cx={cx} cy={cy} rx={r} ry={(r * 0.4209) / s.sy} />
              ))}
            </g>
          ))}
        </g>
      </defs>
      {offsets.map(([x, y]) => (
        <use key={`${x},${y}`} href="#doodles" x={x} y={y} />
      ))}
    </Wallpaper>
  );
}

/* ---------- emoji ---------- */

const GradientDefs = styled.svg`
  position: absolute;
  width: 0;
  height: 0;
`;

function FaceGradients() {
  return (
    <GradientDefs aria-hidden="true">
      <defs>
        <radialGradient id="face" cx="0.5" cy="0.25" r="0.75">
          <stop offset="0" stopColor="#fff04a" />
          <stop offset="0.55" stopColor="#fdcb2c" />
          <stop offset="1" stopColor="#ee8510" />
        </radialGradient>
        <linearGradient id="tear" x1="0" y1="0" x2="0" y2="1">
          <stop offset="0" stopColor="#7cd0f2" />
          <stop offset="1" stopColor="#2f9be0" />
        </linearGradient>
        <linearGradient id="stream" x1="0" y1="0" x2="0" y2="1">
          <stop offset="0" stopColor="#4a8fd0" />
          <stop offset="0.5" stopColor="#65b4f0" />
          <stop offset="1" stopColor="#2f7fdc" />
        </linearGradient>
      </defs>
    </GradientDefs>
  );
}

function JoyEmoji() {
  return (
    <Emoji viewBox="15 20 195 183" role="img" aria-label="😂">
      <circle cx="112" cy="112" r="86" fill="url(#face)" />
      <path d="M48 104Q58 88 78 84M146 84Q166 88 178 104" fill="none" stroke="#9a5c0c" strokeWidth="6" strokeLinecap="round" />
      <path d="M66 112Q82 98 100 112M126 112Q142 98 160 112" fill="none" stroke="#6b3c08" strokeWidth="7" strokeLinecap="round" />
      <path d="M55 124Q112 136 172 124Q168 174 112 175Q60 174 55 124Z" fill="#75400b" />
      <path d="M58 126Q112 137 169 126Q168 144 160 148Q112 154 66 148Q58 142 58 126Z" fill="#fff" />
      <path d="M56 122Q56 162 36 165Q18 164 21 150Q26 138 56 122ZM170 122Q170 162 188 165Q206 164 203 150Q198 138 170 122Z" fill="url(#tear)" />
    </Emoji>
  );
}

function SobEmoji() {
  return (
    <Emoji viewBox="15 20 195 183" role="img" aria-label="😭">
      <circle cx="111" cy="112" r="86" fill="url(#face)" />
      <path d="M57 110H85V191Q70 186 57 176ZM137 110H165V176Q152 187 137 191Z" fill="url(#stream)" />
      <path d="M50 96Q60 78 78 78M144 78Q162 78 172 96" fill="none" stroke="#9a5c0c" strokeWidth="6" strokeLinecap="round" />
      <path d="M58 104Q78 90 98 102M122 102Q144 90 162 104" fill="none" stroke="#6b3c08" strokeWidth="8" strokeLinecap="round" />
      <ellipse cx="111" cy="150" rx="18" ry="23" fill="#75400b" />
      <path d="M96 145Q98 132 111 130Q124 132 126 145Q111 152 96 145Z" fill="#fff" />
    </Emoji>
  );
}

/* ---------- messages ---------- */

interface Message {
  lines: string[];
  time: string;
  placement: Placement;
  min?: number;
  edited?: boolean;
  tail?: boolean;
  faces?: boolean;
}

const messages: Message[] = [
  { lines: ["My brother"], time: "12:16\u202fPM", placement: "beside", min: 518 },
  { lines: ["Good afternoon baba"], time: "12:16\u202fPM", placement: "beside", min: 755 },
  { lines: ["Honestly, I wanted to message you", "yesterday but I got home so late and so", "tired"], time: "12:17\u202fPM", placement: "overlap", min: 979 },
  { lines: ["How are you ?"], time: "12:17\u202fPM", placement: "beside", min: 590 },
  { lines: ["Omoo, I dey enjoy your product ooo"], time: "12:17\u202fPM", placement: "below", min: 883 },
  { lines: ["Infact I got compliments for my skin a lot", "lately"], time: "12:18\u202fPM", placement: "overlap", min: 1003 },
  { lines: ["Na money I dey find,", "Na complements these  girls dey give me"], time: "12:18\u202fPM", placement: "overlap", min: 1007, faces: true },
  { lines: ["I even recently gave someone your", "number, I’m sure she will reach out to", "you once she’s ready to purchase"], time: "12:19\u202fPM", placement: "below", min: 931, edited: true },
  { lines: ["Thank you so much my broski. More", "sales"], time: "12:19\u202fPM", placement: "overlap", min: 904, tail: true },
];

export default function App() {
  return (
    <Screen>
      <GlobalStyle />
      <FaceGradients />
      <DoodleWallpaper />
      <TopBar />
      <Thread>
        <MessageList>
          {messages.map((m) => (
            <Bubble key={m.lines[0]} $min={m.min} $placement={m.placement}>
              {m.tail && (
                <Tail viewBox="0 0 60 60" aria-hidden="true">
                  <path d="M18 0C18 30 14 46 0 58C15 58 28 55 38 48L58 30V0Z" />
                </Tail>
              )}
              <Body>
                {m.lines.map((line) => (
                  <Line key={line}>{line}</Line>
                ))}
                {m.faces && (
                  <Line>
                    <JoyEmoji />
                    <JoyEmoji />
                    <SobEmoji />
                  </Line>
                )}
              </Body>
              <Meta $placement={m.placement}>
                {m.edited && <span>Edited</span>}
                <time>{m.time}</time>
              </Meta>
            </Bubble>
          ))}
          <SentBubble $min={1007} $first>
            <QuoteCard>
              <Quote>
                <QuoteName>TEMI MOORE</QuoteName>
                <QuoteText>{"Honestly, I wanted to message you yesterday but I\ngot home so late and so tired"}</QuoteText>
              </Quote>
            </QuoteCard>
            <SentRow>
              <Body>Eyah</Body>
              <Meta $placement="beside" $sent>
                <time>{"12:20\u202fPM"}</time>
                <Ticks viewBox="0 0 44 26" aria-hidden="true">
                  <path d="M2 15L10 23L26 4M20 21L22 23L40 4" />
                </Ticks>
              </Meta>
            </SentRow>
          </SentBubble>
          <SentBubble $min={587}>
            <QuoteCard>
              <Quote>
                <QuoteName>TEMI MOORE</QuoteName>
              </Quote>
            </QuoteCard>
          </SentBubble>
        </MessageList>
        <ScrollDown type="button" aria-label="Scroll to latest">
          <svg viewBox="0 0 44 44" aria-hidden="true">
            <path d="M5 14L22 32L39 14" />
          </svg>
        </ScrollDown>
      </Thread>
      <Composer onSubmit={(e) => e.preventDefault()}>
        <IconButton type="button" aria-label="Attach">
          <svg viewBox="0 0 70 80">
            <path d="M29 15V69M2 42H56" />
          </svg>
        </IconButton>
        <Field>
          <TextInput type="text" aria-label="Message" />
          <IconButton type="button" aria-label="Stickers">
            <svg viewBox="0 0 70 80">
              <path d="M11 37C11 23 20 17 31 17H43C54 17 62 23 62 37V50C62 60 56 66 45 66H31C18 66 11 60 11 50Z" />
            </svg>
          </IconButton>
        </Field>
        <Actions>
          <IconButton type="button" aria-label="Camera">
            <svg viewBox="0 0 70 80">
              <path d="M3 62V33C3 26 6 24 12 24H17C21 24 23 21 25 18C26 16 28 16 30 16H42C44 16 46 16 47 18C49 21 51 24 55 24H60C66 24 69 26 69 33V62Z" />
              <circle cx="36" cy="43" r="13" />
            </svg>
          </IconButton>
          <IconButton type="button" aria-label="Voice message">
            <svg viewBox="0 0 70 80">
              <path d="M24 20C24 4 46 4 46 20V42C46 57 24 57 24 42Z" />
            </svg>
          </IconButton>
        </Actions>
      </Composer>
    </Screen>
  );
}
